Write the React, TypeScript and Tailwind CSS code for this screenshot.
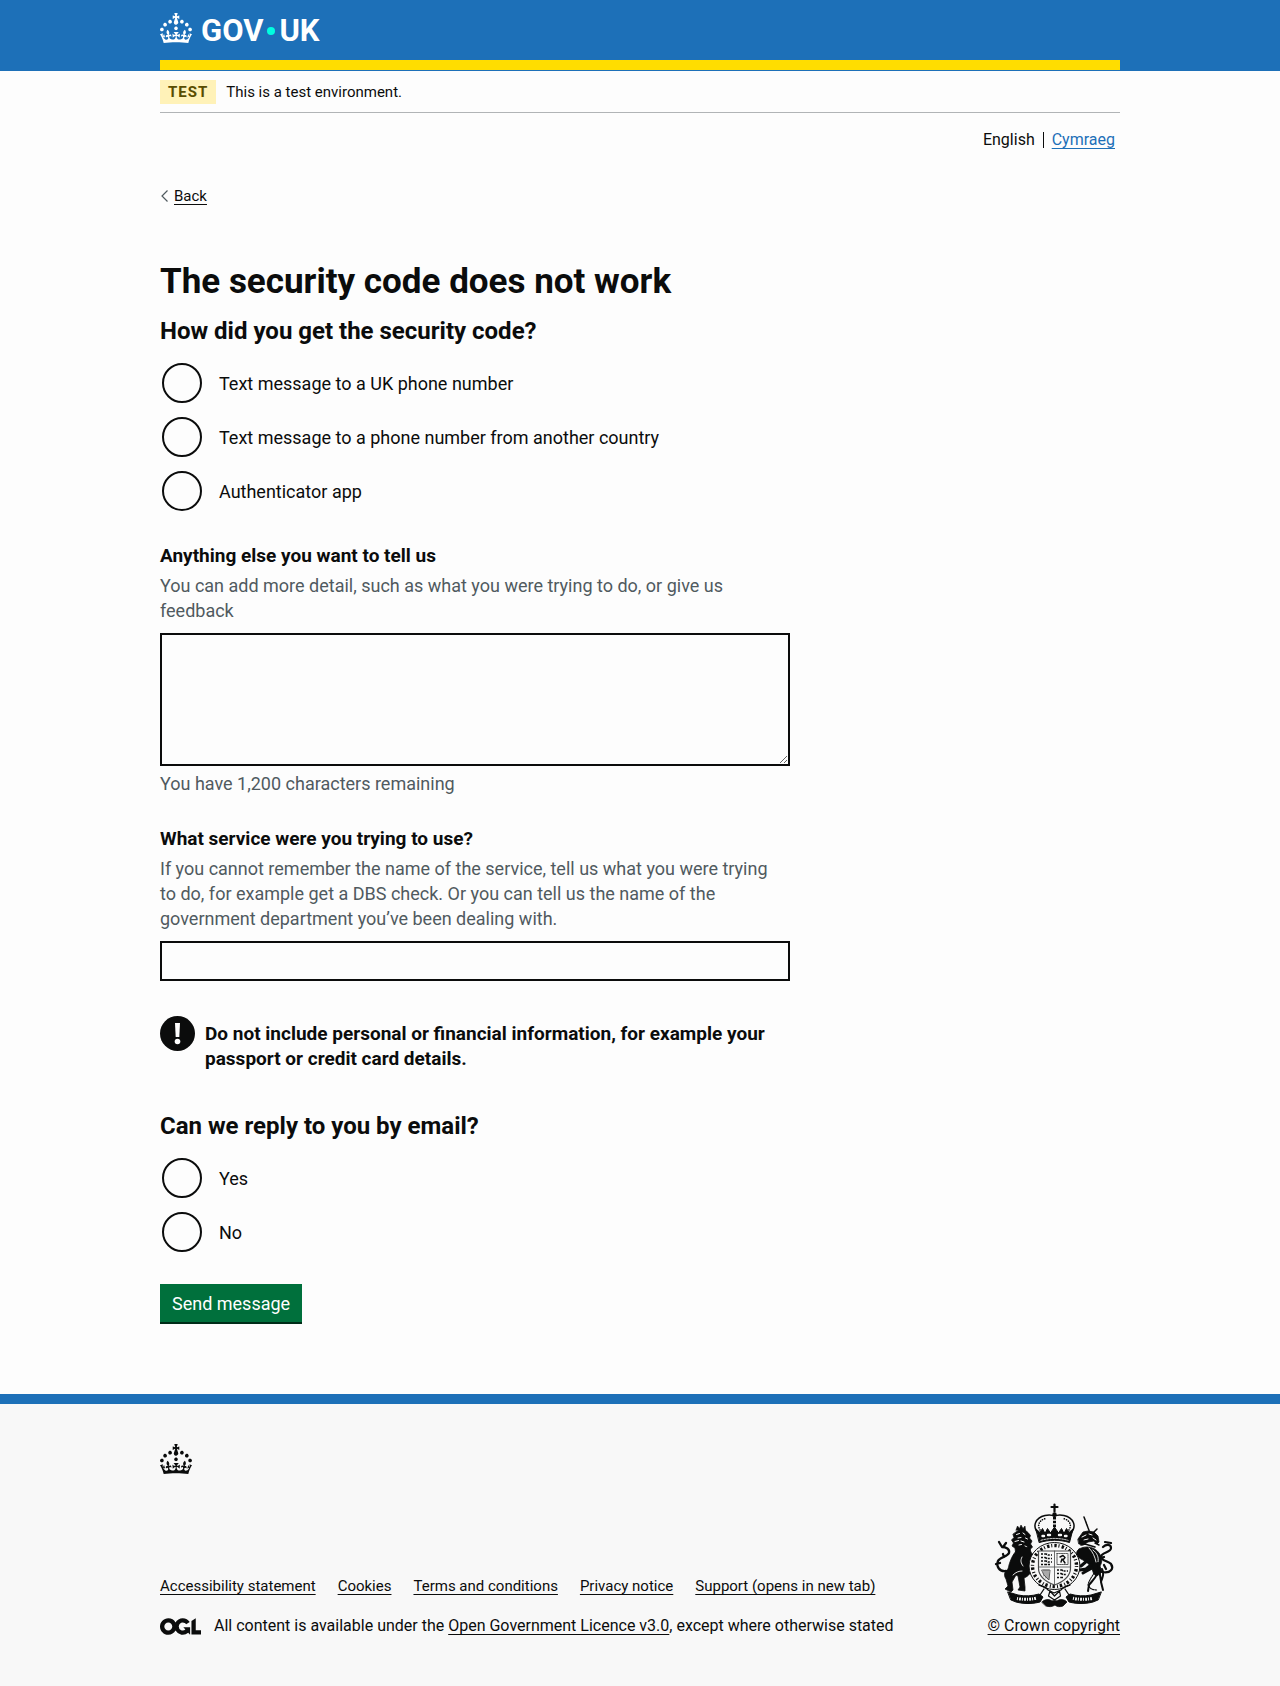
import type { ReactNode } from 'react';

const CROWN =
  'M22.6 10.4c-1 .4-2-.1-2.4-1-.4-.9.1-2 1-2.4.9-.4 2 .1 2.4 1s-.1 2-1 2.4m-5.9 6.7c-.9.4-2-.1-2.4-1-.4-.9.1-2 1-2.4.9-.4 2 .1 2.4 1s-.1 2-1 2.4m10.8-3.7c-1 .4-2-.1-2.4-1-.4-.9.1-2 1-2.4.9-.4 2 .1 2.4 1s0 2-1 2.4m3.3 4.8c-1 .4-2-.1-2.4-1-.4-.9.1-2 1-2.4.9-.4 2 .1 2.4 1s-.1 2-1 2.4M17 4.7l2.3 1.2V2.5l-2.3.7-.2-.2.9-3h-3.4l.9 3-.2.2c-.1.1-2.3-.7-2.3-.7v3.4L15 4.7c.1.1.1.2.2.2l-1.3 4c-.1.2-.1.4-.1.6 0 1.1.8 2 1.9 2.2h.7c1-.2 1.9-1.1 1.9-2.1 0-.2 0-.4-.1-.6l-1.3-4c-.1-.2 0-.2.1-.3m-7.6 5.7c.9.4 2-.1 2.4-1 .4-.9-.1-2-1-2.4-.9-.4-2 .1-2.4 1s0 2 1 2.4m-5 3c.9.4 2-.1 2.4-1 .4-.9-.1-2-1-2.4-.9-.4-2 .1-2.4 1s.1 2 1 2.4m-3.2 4.8c.9.4 2-.1 2.4-1 .4-.9-.1-2-1-2.4-.9-.4-2 .1-2.4 1s0 2 1 2.4m14.8 11c4.4 0 8.6.3 12.3.8 1.1-4.5 2.4-7 3.7-8.8l-2.5-.9c.2 1.3.3 1.9 0 2.7-.4-.4-.8-1.1-1.1-2.3l-1.2 4c.7-.5 1.3-.8 2-.9-1.1 2.5-2.6 3.1-3.5 3-1.1-.2-1.7-1.2-1.5-2.1.3-1.2 1.5-1.5 2.1-.1 1.1-2.3-.8-3-2-2.3 1.9-1.9 2.1-3.5.6-5.6-2.1 1.6-2.1 3.2-1.2 5.5-1.2-1.4-3.2-.6-2.5 1.6.9-1.4 2.1-.5 1.9.8-.2 1.1-1.7 2.1-3.5 1.9-2.7-.2-2.9-2.1-2.9-3.6.7-.1 1.9.5 2.9 1.9l.4-4.3c-1.1 1.1-2.1 1.4-3.2 1.4.4-1.2 2.1-3 2.1-3h-5.4s1.7 1.9 2.1 3c-1.1 0-2.1-.2-3.2-1.4l.4 4.3c1-1.4 2.2-2 2.9-1.9-.1 1.5-.2 3.4-2.9 3.6-1.9.2-3.4-.8-3.5-1.9-.2-1.3 1-2.2 1.9-.8.7-2.3-1.2-3-2.5-1.6.9-2.2.9-3.9-1.2-5.5-1.5 2-1.3 3.7.6 5.6-1.2-.7-3.1 0-2 2.3.6-1.4 1.8-1.1 2.1.1.2.9-.3 1.9-1.5 2.1-.9.2-2.4-.5-3.5-3 .6 0 1.2.3 2 .9l-1.2-4c-.3 1.1-.7 1.9-1.1 2.3-.3-.8-.2-1.4 0-2.7l-2.9.9C1.3 23 2.6 25.5 3.7 30c3.7-.5 7.9-.8 12.3-.8';

function Crown() {
  return (
    <svg aria-hidden="true" viewBox="0 0 32 30" width="32" height="30" fill="currentColor" className="shrink-0">
      <path fillRule="evenodd" d={CROWN} />
    </svg>
  );
}

function OglLogo() {
  return (
    <svg aria-hidden="true" viewBox="0 0 483.2 195.7" width="41" height="17" fill="currentColor" className="shrink-0">
      <path d="M421.5 142.8V.1l-50.7 32.3v161.1h112.4v-50.7zm-122.3-9.6A47.12 47.12 0 0 1 221 97.8c0-26 21.1-47.1 47.1-47.1 16.7 0 31.4 8.7 39.7 21.8l42.7-27.2A97.63 97.63 0 0 0 268.1 0c-36.5 0-68.3 20.1-85.1 49.7A98 98 0 0 0 97.8 0C43.9 0 0 43.9 0 97.8s43.9 97.8 97.8 97.8c36.5 0 68.3-20.1 85.1-49.7a97.76 97.76 0 0 0 149.6 25.4l19.4 22.2h3v-87.8h-80l24.3 27.5zM97.8 145c-26 0-47.1-21.1-47.1-47.1s21.1-47.1 47.1-47.1 47.1 21.1 47.1 47.1S123.8 145 97.8 145" />
    </svg>
  );
}

function RoyalArms() {
  return (
    <svg aria-hidden="true" viewBox="0 0 120 105" width="120" height="105" fill="none" stroke="#0b0c0c" strokeLinecap="round" strokeLinejoin="round">
      {/* crown */}
      <g>
        <path d="M60.500 1.500v7M57.500 4h6" strokeWidth="2.200" />
        <circle cx="60.500" cy="11.500" r="2.200" fill="#0b0c0c" stroke="none" />
        <path d="M45 31C37 23 42 14.500 51 12.500c4-.8 7.500-.5 9.500 1 2-1.500 5.500-1.800 9.500-1 9 2 14 10.500 6 18.500" strokeWidth="1.500" />
        <path d="M47.500 29C42 22.500 45 17 52 15.500M73.500 29C79 22.500 76 17 69 15.500" strokeWidth="1.600" strokeDasharray=".1 2.300" />
        <path d="M60.500 14v13" strokeWidth="3" strokeDasharray="2.500 1.300" strokeLinecap="butt" />
        <path d="M42 26l4 3.500 2.500-4 2.500 5 2.500-5 3 4.500 4-6 4 6 3-4.500 2.500 5 2.500-5 2.500 4 4-3.500-3.500 13.500c-10-3-20-3-30 0z" fill="#0b0c0c" strokeWidth="1" />
        <path d="M48.500 33h1.500M54 32h2M65 32h2M71 33h1.500" stroke="#f8f8f8" strokeWidth="2.400" />
        <path d="M47 37.300c9-2.500 18-2.500 27 0" stroke="#f8f8f8" strokeWidth="1" strokeDasharray="1.500 1.500" />
      </g>
      {/* lion */}
      <g>
        <path d="M22 27l1.500-4 2 2.500L27 22l2 3.500L31 23l.5 4z" fill="#0b0c0c" strokeWidth=".6" />
        <path d="M22 29l3-2h6l3 2.500 2.500 3-1 2.500 2.500 3-1.500 3 2 3-2 2-1 4-4-1-3 2-3-2.500-4 .5-.5-4-3-2 1.500-3-2-3 2.500-2.500-1-3z" fill="#0b0c0c" strokeWidth=".8" />
        <path d="M22.500 31.500l3-1M24 35l3-.5M29 30l2 1.500M21 38.500l3.500-1M27 38l3 1M31.500 35l2 1M25 42l2.500-.5M31 43l2 1" stroke="#f8f8f8" strokeWidth="1" />
        <path d="M27 44c-6 4-9 9-11 15-2 5-1 7-4 9-2 2-2 5 0 8l2 7-3 3 6 3 2-2-1-8 4-7 2 1 2 11-2 3 7 1v-4l-1-9c5-2 8-6 8-11l3-6 5-1-2-5-6-1-3-6z" fill="#0b0c0c" strokeWidth=".8" />
        <path d="M31 55l7 4 4-1M30 63l6 3" strokeWidth="2.600" />
        <path d="M28 54c-2 4-1 6 1 9M19 72c3-3 6-4 9-4" stroke="#f8f8f8" strokeWidth=".9" />
        <path d="M12 68C5 69 2 63 4 58c2-4 9-4 11-8 1-4-3-6-7-6M8 44l-3-5M9 44l3-4M6 60l-4 1M10 54l-1-3" strokeWidth="2.300" />
      </g>
      {/* unicorn */}
      <g>
        <path d="M90 14l6 16" strokeWidth="1.500" strokeDasharray="3 .8" />
        <path d="M84 36l5-7 5-1 6 1 4 4 1 6-2 2-3-3-6 1-5 3-4-1z" fill="#0b0c0c" strokeWidth=".8" />
        <path d="M88 34l4-2M95 31l3 1M99 35l3 2M90 37l4-1" stroke="#f8f8f8" strokeWidth="1" />
        <path d="M87 42l4-1 10 3M100 29l3-3M101 40l4 2M86 39l8-1" strokeWidth="1.500" />
        <path d="M85 46c7-4 16-2 20 4 3 4 4 8 1 13l2 6-5 4c-3 0-4-4-5-7-2-5-7-8-11-10-5-2-6-7-2-10z" fill="#0b0c0c" strokeWidth=".8" />
        <path d="M99 47c4 3 6 7 5 12M95 45c4 4 6 9 7 14" stroke="#f8f8f8" strokeWidth=".9" />
        <path d="M94 57l-7 6M97 62l-5 4-6 1M98 65l-9 5" strokeWidth="3" />
        <path d="M108 66c3 6 0 9-1 13l2 8M103 71c-2 5-5 7-8 11l-1 6M104 60l3 18" strokeWidth="2" />
        <path d="M100 70c-2 4-5 7-6 12 2 4 5 5 9 5" strokeWidth="1.100" strokeDasharray="1.500 1" />
        <path d="M108 69c9 2 12-4 9-8-3-3-9-3-10-7 0-5 10-4 10-9 0-4-5-4-8-1M117 40l-6-1M117 61l1 3M110 54l-3 1M112 66l-2-4" strokeWidth="2.200" />
      </g>
      {/* garter and shield */}
      <ellipse cx="60.500" cy="63" rx="25.500" ry="23.500" fill="#f8f8f8" strokeWidth="1" />
      <ellipse cx="60.500" cy="63" rx="22" ry="20.500" strokeWidth="3.400" strokeDasharray="1 2.200 2.400 1.800" strokeLinecap="butt" />
      <path d="M44.500 48h32v17c0 9-8 14-16 17-8-3-16-8-16-17z" fill="#f8f8f8" stroke="#4a4b4b" strokeWidth="1.200" />
      <path d="M60.500 48v34M44.500 64h32" stroke="#4a4b4b" strokeWidth=".8" />
      <path d="M47 51h5l2 1h4M47 54.500h4l2 1h5M47 58h5l2 1h4M63 67h5l1 1h5M63 70.500h4l2 1h4M63 74.500h6M47 61.500h10" strokeWidth="1.500" strokeDasharray="2 1.200 3 .8" strokeLinecap="butt" />
      <path d="M63 50.500h11v11H63z" stroke="#4a4b4b" strokeWidth=".9" strokeDasharray="1 .8" />
      <path d="M66 54l3-1.500 2 2-2 2.500 2 3M67 59l1-3" strokeWidth="1.400" />
      <path d="M48 67h8l-1 10-5-5zM50 67v6M52 67v8M54 67v9" stroke="#4a4b4b" strokeWidth=".9" />
      {/* motto ribbon and base */}
      <path d="M45 82c4 1 7 2 9 5l6 3 7-3c2-3 5-4 9-5M50 86l-4 6M71 86l4 6" strokeWidth="1.300" />
      <path d="M56 88l4.500 5 5-5 1 5-6 4-6-4z" strokeWidth="1.200" />
      <path d="M14 89l10 3c7 1.500 14 1 21-1l4 3-3 5c-8 2-16 2-24 0l-5-2zM107 89l-10 3c-7 1.500-14 1-21-1l-4 3 3 5c8 2 16 2 24 0l5-2z" fill="#0b0c0c" strokeWidth="1" />
      <path d="M23 95.500c6 1.200 13 1.200 19-.3M79 95.200c6 1.500 13 1.500 19 .3" stroke="#f8f8f8" strokeWidth="3" strokeDasharray="1 1.200 1.800 1" strokeLinecap="butt" />
      <path d="M48 99c3-3 7-3 10-1 2-1 3-1 5 0 3-2 7-2 10 1l-4 4c-3 1-6 1-8-1-3 2-6 2-9 1z" fill="#0b0c0c" strokeWidth=".8" />
    </svg>
  );
}

const linkStyle = 'underline decoration-1 underline-offset-[3px]';

function Radio({ name, value, children }: { name: string; value: string; children: ReactNode }) {
  const id = `${name}-${value}`;
  return (
    <div className="flex items-center">
      <span className="flex h-11 w-11 shrink-0 items-center p-0.5">
        <input
          type="radio"
          id={id}
          name={name}
          value={value}
          className="h-10 w-10 appearance-none rounded-full border-2 border-[#0b0c0c] checked:bg-[#0b0c0c] checked:shadow-[inset_0_0_0_8px_#fdfdfd]"
        />
      </span>
      <label htmlFor={id} className="pl-[15px] text-[18px] leading-[25px]">
        {children}
      </label>
    </div>
  );
}

const footerLinks = ['Accessibility statement', 'Cookies', 'Terms and conditions', 'Privacy notice', 'Support (opens in new tab)'];

export default function App() {
  return (
    <div className="bg-[#fdfdfd] font-['Roboto',sans-serif] text-[#0b0c0c]">
      <header className="bg-[#1d70b8] pb-px text-white">
        <div className="mx-auto max-w-[960px] border-b-10 border-[#ffdd00]">
          <a href="#" aria-label="GOV.UK" className="flex h-15 w-fit items-center gap-[9px] pb-1">
            <Crown />
            <span className="flex items-center pt-1.5 text-[31px] leading-[30px] font-bold">
              GOV
              <span className="mx-1 h-2 w-2 rounded-full bg-[#00ffe0]" />
              UK
            </span>
          </a>
        </div>
      </header>

      <div className="mx-auto max-w-[960px]">
        <div className="flex items-center gap-2.5 border-b border-[#b1b4b6] pt-[9px] pb-2 text-[15px]">
          <strong className="bg-[#fff2b8] px-2 leading-6 font-bold tracking-[1px] text-[#594d00]">TEST</strong>
          <span className="leading-5">This is a test environment.</span>
        </div>
        <nav aria-label="Language" className="mt-[17px] flex justify-end pr-[5px] text-[16px] leading-5">
          <span>English</span>
          <span className="mx-2 my-0.5 w-px bg-[#0b0c0c]" />
          <a href="#" className={`${linkStyle} text-[#1d70b8]`}>Cymraeg</a>
        </nav>
        <a href="#" className="mt-9 flex w-fit items-center text-[15px] leading-5">
          <svg aria-hidden="true" viewBox="0 0 14 14" width="14" height="14" fill="none" stroke="#505a5f" strokeWidth="1.200">
            <path d="M7.500 1.500L2 7l5.500 5.500" />
          </svg>
          <span className={linkStyle}>Back</span>
        </a>

        <main className="max-w-[630px] pt-14 pb-[72px]">
          <h1 className="text-[35px] leading-10 font-bold">The security code does not work</h1>
          <form>
            <fieldset className="mt-3.5">
              <legend className="text-2xl leading-[30px] font-bold">How did you get the security code?</legend>
              <div className="mt-[15px] flex flex-col gap-2.5">
                <Radio name="method" value="uk">Text message to a UK phone number</Radio>
                <Radio name="method" value="international">Text message to a phone number from another country</Radio>
                <Radio name="method" value="app">Authenticator app</Radio>
              </div>
            </fieldset>

            <div className="mt-[30px]">
              <label htmlFor="more" className="block text-[19px] leading-[25px] font-bold">Anything else you want to tell us</label>
              <p className="mt-[5px] max-w-[620px] text-[18px] leading-[25px] text-[#505a5f]">
                You can add more detail, such as what you were trying to do, or give us feedback
              </p>
              <textarea id="more" rows={5} className="mt-2.5 block h-[133px] w-full resize-y border-2 border-[#0b0c0c] p-[5px] text-[18px] leading-[25px]" />
              <p className="mt-[5px] text-[18px] leading-[25px] text-[#505a5f]">You have 1,200 characters remaining</p>
            </div>

            <div className="mt-[30px]">
              <label htmlFor="service" className="block text-[19px] leading-[25px] font-bold">What service were you trying to use?</label>
              <p className="mt-[5px] max-w-[620px] text-[18px] leading-[25px] text-[#505a5f]">
                If you cannot remember the name of the service, tell us what you were trying to do, for example get a DBS check. Or you can tell us the name of the government department you’ve been dealing with.
              </p>
              <input id="service" type="text" className="mt-2.5 block h-10 w-full border-2 border-[#0b0c0c] p-[5px] text-[18px]" />
            </div>

            <div className="mt-[35px] flex items-start gap-2.5">
              <svg aria-hidden="true" viewBox="0 0 35 35" width="35" height="35" className="shrink-0">
                <circle cx="17.500" cy="17.500" r="17.500" fill="#0b0c0c" />
                <path d="M15 7h5l-.7 14h-3.600z" fill="#fff" />
                <circle cx="17.500" cy="25.500" r="2.800" fill="#fff" />
              </svg>
              <strong className="pt-[5px] text-[19px] leading-[25px] font-bold">
                Do not include personal or financial information, for example your passport or credit card details.
              </strong>
            </div>

            <fieldset className="mt-10">
              <legend className="text-2xl leading-[30px] font-bold">Can we reply to you by email?</legend>
              <div className="mt-[15px] flex flex-col gap-2.5">
                <Radio name="reply" value="yes">Yes</Radio>
                <Radio name="reply" value="no">No</Radio>
              </div>
            </fieldset>

            <button type="submit" className="mt-[30px] block h-[38px] bg-[#00703c] px-3 text-[18px] leading-10 text-white shadow-[0_2px_0_#002d18]">
              Send message
            </button>
          </form>
        </main>
      </div>

      <footer className="border-t-10 border-[#1d70b8] bg-[#f8f8f8]">
        <div className="mx-auto max-w-[960px] pt-10 pb-[50px]">
          <Crown />
          <div className="mt-[29px] flex items-end justify-between">
            <div className="text-[15px] leading-5">
              <ul className="flex flex-wrap gap-x-[22px]">
                {footerLinks.map((label) => (
                  <li key={label}>
                    <a href="#" className={linkStyle}>{label}</a>
                  </li>
                ))}
              </ul>
              <div className="mt-5 flex items-center gap-[13px] text-[16px]">
                <OglLogo />
                <span>
                  All content is available under the <a href="#" className={linkStyle}>Open Government Licence v3.0</a>, except where otherwise stated
                </span>
              </div>
            </div>
            <a href="#" className="flex flex-col items-center text-[16px] leading-5">
              <RoyalArms />
              <span className={`${linkStyle} mt-2`}>© Crown copyright</span>
            </a>
          </div>
        </div>
      </footer>
    </div>
  );
}
